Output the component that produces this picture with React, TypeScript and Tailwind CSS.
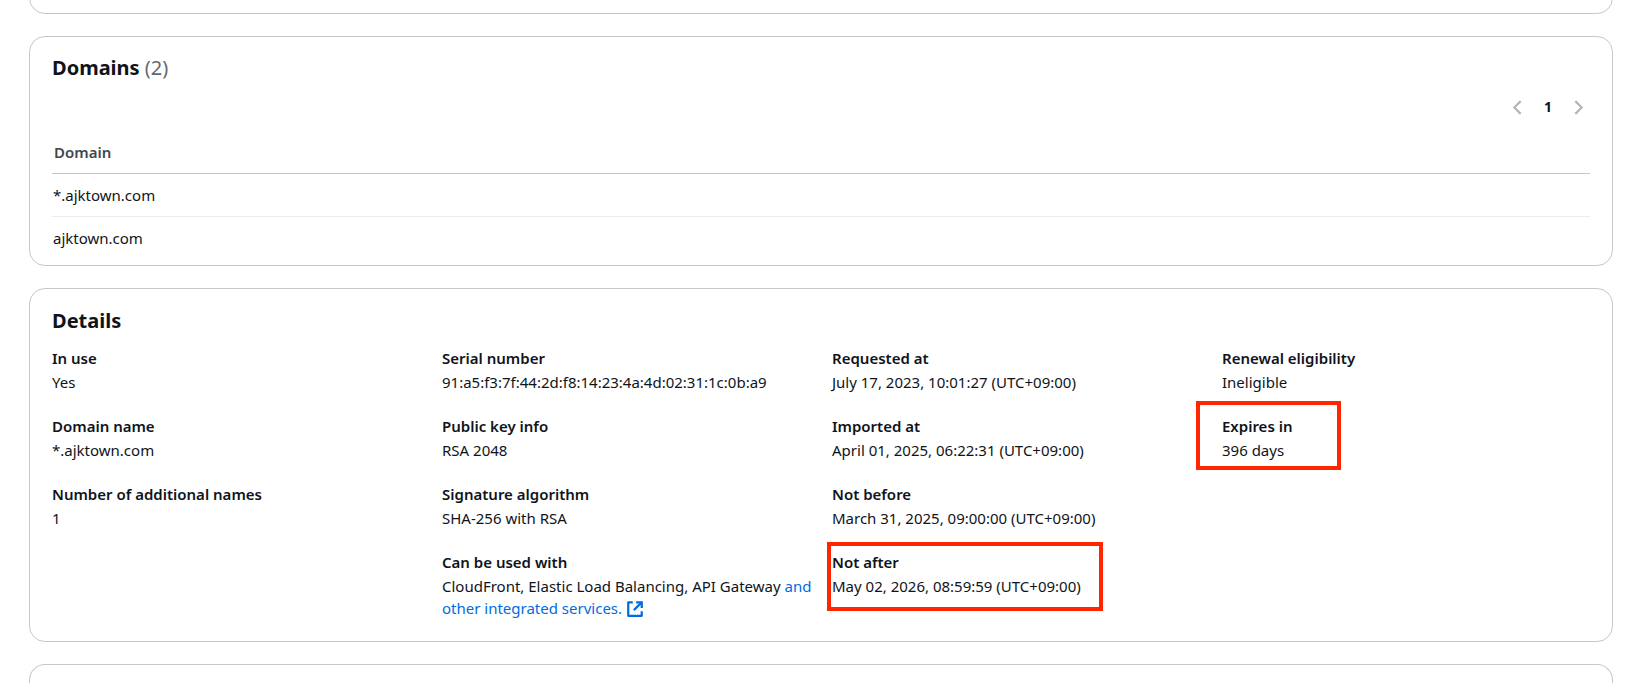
import type { ReactNode } from "react";

type Field = {
  label: string;
  value: ReactNode;
  mark?: string;
};

function ExternalIcon() {
  return (
    <svg
      viewBox="0 0 16 16"
      className="ml-1 inline-block size-[18px] align-[-4px]"
      fill="none"
      stroke="currentColor"
      strokeWidth="2"
      aria-hidden="true"
    >
      <path d="M9 2h5v5" />
      <path d="M7 9l7-7" />
      <path d="M14 10v4H2V2h4" strokeLinejoin="round" />
    </svg>
  );
}

function Chevron({ d }: { d: string }) {
  return (
    <svg viewBox="0 0 16 16" className="size-[17px]" fill="none" stroke="#b4b4bb" strokeWidth="2" aria-hidden="true">
      <path d={d} />
    </svg>
  );
}

const columns: Field[][] = [
  [
    { label: "In use", value: "Yes" },
    { label: "Domain name", value: "*.ajktown.com" },
    { label: "Number of additional names", value: "1" },
  ],
  [
    { label: "Serial number", value: "91:a5:f3:7f:44:2d:f8:14:23:4a:4d:02:31:1c:0b:a9" },
    { label: "Public key info", value: "RSA 2048" },
    { label: "Signature algorithm", value: "SHA-256 with RSA" },
    {
      label: "Can be used with",
      value: (
        <>
          CloudFront, Elastic Load Balancing, API Gateway{" "}
          <a href="#services" className="text-[#006ce0]">
            and other integrated services.
            <ExternalIcon />
          </a>
        </>
      ),
    },
  ],
  [
    { label: "Requested at", value: "July 17, 2023, 10:01:27 (UTC+09:00)" },
    { label: "Imported at", value: "April 01, 2025, 06:22:31 (UTC+09:00)" },
    { label: "Not before", value: "March 31, 2025, 09:00:00 (UTC+09:00)" },
    {
      label: "Not after",
      value: "May 02, 2026, 08:59:59 (UTC+09:00)",
      mark: "-top-[9px] -left-[5px] h-[69px] w-[276px]",
    },
  ],
  [
    { label: "Renewal eligibility", value: "Ineligible" },
    {
      label: "Expires in",
      value: "396 days",
      mark: "-top-[14px] -left-[26px] h-[69px] w-[145px]",
    },
  ],
];

const domains = ["*.ajktown.com", "ajktown.com"];

export default function App() {
  return (
    <main className="flex min-h-screen flex-col gap-[22px] overflow-hidden bg-white pr-5 pl-[29px] font-['Noto_Sans',sans-serif] text-[15px] leading-[22px] text-[#0f141a]">
      <div className="-mt-4 h-[30px] shrink-0 rounded-b-2xl border border-[#c6c6cd]" />

      <section className="rounded-2xl border border-[#c6c6cd] px-[22px] pt-[18px] pb-[6px]">
        <h2 className="text-[20px] leading-[26px] font-bold">
          Domains <span className="font-normal text-[#656871]">(2)</span>
        </h2>
        <nav aria-label="Pagination" className="mt-[15px] flex items-center justify-end gap-[14px] pr-[3px]">
          <button type="button" aria-label="Previous page" disabled>
            <Chevron d="M11 2 5 8l6 6" />
          </button>
          <button type="button" className="w-4 text-center text-[14px] font-bold">
            1
          </button>
          <button type="button" aria-label="Next page" disabled>
            <Chevron d="m5 2 6 6-6 6" />
          </button>
        </nav>
        <table className="mt-[23px] w-full border-separate border-spacing-0 text-left">
          <thead>
            <tr>
              <th className="border-b border-[#c6c6cd] px-[2px] pb-[10px] font-semibold text-[#424650]">Domain</th>
            </tr>
          </thead>
          <tbody>
            {domains.map((name) => (
              <tr key={name} className="group">
                <td className="border-b border-[#ebebf0] px-px py-[10px] group-last:border-b-0">{name}</td>
              </tr>
            ))}
          </tbody>
        </table>
      </section>

      <section className="rounded-2xl border border-[#c6c6cd] px-[22px] pt-[19px] pb-[22px]">
        <h2 className="text-[20px] leading-[26px] font-bold">Details</h2>
        <div className="mt-[13px] grid grid-cols-4 gap-[22px]">
          {columns.map((fields) => (
            <dl key={fields[0].label} className="flex min-w-0 flex-col gap-[22px]">
              {fields.map((field) => (
                <div key={field.label} className="relative">
                  <dt className="mb-[2px] font-semibold">{field.label}</dt>
                  <dd className="-mr-2">{field.value}</dd>
                  {field.mark && (
                    <span
                      aria-hidden="true"
                      className={`pointer-events-none absolute border-4 border-[#ff2600] ${field.mark}`}
                    />
                  )}
                </div>
              ))}
            </dl>
          ))}
        </div>
      </section>

      <div className="min-h-[19px] flex-1 rounded-t-2xl border border-b-0 border-[#c6c6cd]" />
    </main>
  );
}
